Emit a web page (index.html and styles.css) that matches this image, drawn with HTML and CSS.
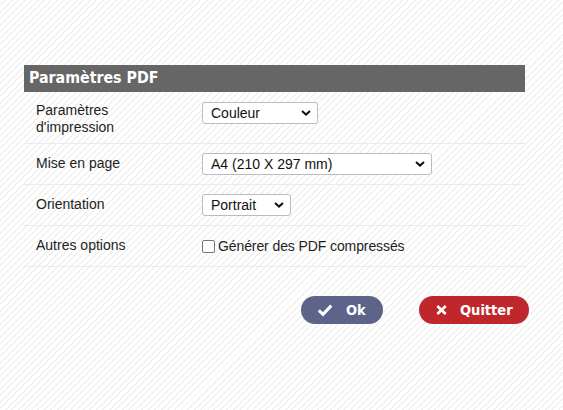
FILE: index.html
```html
<!DOCTYPE html>
<html lang="fr">
<head>
<meta charset="utf-8">
<title>Paramètres PDF</title>
<link rel="stylesheet" href="styles.css">
</head>
<body>
<div class="page">
  <section class="panel">
    <h1 class="panel-title">Paramètres PDF</h1>
    <div class="row row-tall">
      <div class="label">Paramètres<br>d'impression</div>
      <div class="value">
        <span class="select w-couleur">
          <span class="select-text">Couleur</span>
          <svg class="chev" viewBox="0 0 10 6" width="10" height="6"><path d="M1 1 L5 4.6 L9 1" fill="none" stroke="#111" stroke-width="2"/></svg>
        </span>
      </div>
    </div>
    <div class="row">
      <div class="label">Mise en page</div>
      <div class="value">
        <span class="select w-format">
          <span class="select-text">A4 (210 X 297 mm)</span>
          <svg class="chev" viewBox="0 0 10 6" width="10" height="6"><path d="M1 1 L5 4.6 L9 1" fill="none" stroke="#111" stroke-width="2"/></svg>
        </span>
      </div>
    </div>
    <div class="row">
      <div class="label">Orientation</div>
      <div class="value">
        <span class="select w-orient">
          <span class="select-text">Portrait</span>
          <svg class="chev" viewBox="0 0 10 6" width="10" height="6"><path d="M1 1 L5 4.6 L9 1" fill="none" stroke="#111" stroke-width="2"/></svg>
        </span>
      </div>
    </div>
    <div class="row">
      <div class="label">Autres options</div>
      <div class="value">
        <label class="check"><span class="box"></span><span>Générer des PDF compressés</span></label>
      </div>
    </div>
  </section>
  <div class="actions">
    <button class="btn btn-ok" type="button">
      <svg class="btn-icon" viewBox="0 0 16 14" width="16" height="14"><path d="M1.8 7.4 L6 11.3 L14.3 2.6" fill="none" stroke="#fff" stroke-width="3" stroke-linejoin="miter"/></svg>
      <span>Ok</span>
    </button>
    <button class="btn btn-quit" type="button">
      <svg class="btn-icon" viewBox="0 0 11 10" width="11" height="10"><path d="M1.3 1 L9.7 9 M9.7 1 L1.3 9" fill="none" stroke="#fff" stroke-width="2.7"/></svg>
      <span>Quitter</span>
    </button>
  </div>
</div>
</body>
</html>
```
FILE: styles.css
```css
html, body {
  margin: 0;
  padding: 0;
}
body {
  width: 563px;
  height: 410px;
  background: repeating-linear-gradient(135deg, #ffffff 0 3.2px, #f1f1f1 3.2px 4.6px);
  font-family: "Liberation Sans", Arial, sans-serif;
  font-size: 14px;
  color: #1e1e1e;
}
.page {
  padding: 65px 0 0 24px;
}
.panel {
  width: 501px;
}
.panel-title {
  margin: 0;
  height: 27px;
  line-height: 26px;
  padding: 0 5px;
  background: #666666;
  color: #ffffff;
  font-family: "DejaVu Sans Condensed", "DejaVu Sans", Verdana, sans-serif;
  font-stretch: condensed;
  font-weight: bold;
  font-size: 15.8px;
}
.row {
  display: grid;
  grid-template-columns: 178px 1fr;
  align-items: center;
  height: 40px;
  border-bottom: 1px solid #ebebeb;
}
.row-tall {
  height: 51px;
  align-items: start;
}
.label {
  padding-left: 12px;
  line-height: 16px;
  padding-bottom: 3px;
}
.row-tall .label {
  padding-top: 10px;
  padding-bottom: 0;
  line-height: 17px;
}
.row-tall .value {
  padding-top: 10px;
}
.select {
  position: relative;
  display: flex;
  align-items: center;
  box-sizing: border-box;
  height: 22px;
  border: 1px solid #b7bcc6;
  border-radius: 3px;
  background: #ffffff;
  padding-left: 8px;
  color: #111111;
}
.w-couleur { width: 116px; }
.w-format { width: 230px; }
.w-orient { width: 89px; }
.chev {
  position: absolute;
  right: 6px;
  top: 7px;
}
.check {
  display: flex;
  align-items: center;
  gap: 3px;
  color: #1e1e1e;
  letter-spacing: -0.1px;
}
.box {
  box-sizing: border-box;
  width: 13px;
  height: 13px;
  border: 1px solid #767676;
  border-radius: 2px;
  background: #ffffff;
}
.actions {
  display: flex;
  gap: 36px;
  padding: 29px 0 0 277px;
}
.btn {
  display: flex;
  align-items: center;
  height: 28px;
  border: 0;
  border-radius: 14px;
  color: #ffffff;
  font-family: "DejaVu Sans Condensed", "DejaVu Sans", Verdana, sans-serif;
  font-stretch: condensed;
  font-weight: bold;
  font-size: 14.5px;
  padding: 0;
}
.btn-ok {
  width: 82px;
  background: #5e6389;
  padding-left: 16px;
  gap: 13px;
}
.btn-quit {
  width: 110px;
  background: #c0272d;
  padding-left: 17px;
  gap: 13px;
}
```
